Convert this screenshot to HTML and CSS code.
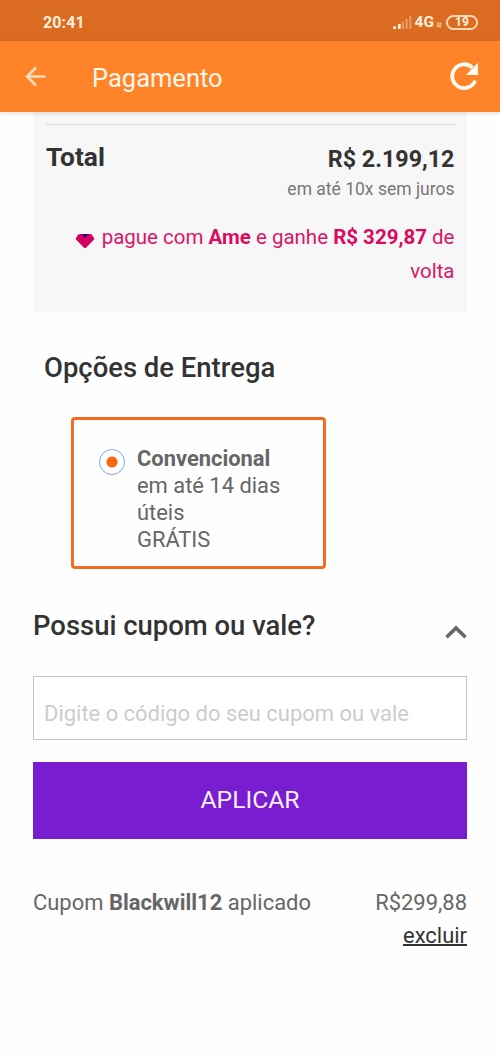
FILE: index.html
```html
<!DOCTYPE html>
<html lang="pt-BR">
<head>
<meta charset="utf-8">
<title>Pagamento</title>
<link rel="stylesheet" href="styles.css">
</head>
<body>
<div class="status">
  <span class="clock">20:41</span>
  <svg class="signal" width="19" height="13" viewBox="0 0 19 13">
    <path fill="#fff0d8" d="M0 10.500h3.200V13H0zM5 8h2.600v5H5z"/>
    <path fill="#fff" opacity=".32" d="M8.800 5.500h2.200v7.500H8.800zM12.500 3h2.200v10h-2.200zM16.200 0h2.200v13h-2.200z"/>
  </svg>
  <span class="network">4G</span>
  <svg class="data" width="6" height="6" viewBox="0 0 6 6"><path d="M2 0v5L.3 3.500M4 6V1l1.700 1.300" fill="none" stroke="#ffe4cc"/></svg>
  <span class="battery">19</span>
</div>
<header class="appbar">
  <svg class="back" width="22" height="21" viewBox="0 0 22 21"><path d="M20.500 10.500H2.500M11 1.500l-9 9 9 9" fill="none" stroke="#ffdcba" stroke-width="2.600"/></svg>
  <h1 class="title">Pagamento</h1>
  <svg class="reload" width="29" height="28" viewBox="0 0 29 28"><path d="M25.200 18.600A11.900 11.900 0 1 1 22.400 5.600" fill="none" stroke="#fffaf0" stroke-width="3.800"/><path d="M28 .8V13H15.800z" fill="#fffaf0"/></svg>
</header>
<main class="page">
  <section class="summary">
    <div class="total-row">
      <h2 class="total">Total</h2>
      <div class="price">
        <strong class="amount">R$ 2.199,12</strong>
        <span class="terms">em até 10x sem juros</span>
      </div>
    </div>
    <p class="cashback"><svg class="gem" width="20" height="16" viewBox="0 0 20 16"><path d="M5 1h10q1.200 0 2 .9L19 5q.6 1-.2 1.800L11 14.800q-1 .9-2 0L1.200 6.800Q.4 6 1 5l2-3.100Q3.800 1 5 1z" fill="#d4005f"/><path d="M6.600 1h6.800L11 4.200H9z" fill="#2c087c"/></svg>pague com <b>Ame</b> e ganhe <b>R$ 329,87</b> de<br>volta</p>
  </section>
  <h2 class="heading delivery-heading">Opções de Entrega</h2>
  <label class="option">
    <span class="radio"></span>
    <span class="option-text"><b>Convencional</b><br>em até 14 dias<br>úteis<br>GRÁTIS</span>
  </label>
  <div class="coupon-head">
    <h2 class="heading">Possui cupom ou vale?</h2>
    <svg class="chevron" width="22" height="14" viewBox="0 0 22 14"><path d="M1.500 12.300L11 3l9.500 9.300" fill="none" stroke="#666" stroke-width="3.600"/></svg>
  </div>
  <input class="code" type="text" placeholder="Digite o código do seu cupom ou vale">
  <button class="apply">APLICAR</button>
  <div class="applied">
    <span>Cupom <b>Blackwill12</b> aplicado</span>
    <span class="discount">R$299,88<br><a class="remove">excluir</a></span>
  </div>
</main>
</body>
</html>
```
FILE: styles.css
```css
* { box-sizing: border-box; }
body { margin: 0; background: #fefefe; color: #666; font-family: Roboto, sans-serif; font-size: 22px; }
h1, h2, p { margin: 0; }
b, strong { font-weight: 700; }

.status { display: flex; align-items: center; height: 41px; padding: 3px 22px 0 43px; background: #da6b21; color: #fff0dc; }
.clock { flex: 1; font-size: 16px; font-weight: 700; letter-spacing: .1px; }
.signal { margin: 0 3px 0 0; }
.network { font-size: 15.500px; font-weight: 700; line-height: 18px; }
.data { margin: 6px 4px 0 2px; }
.battery { width: 32px; height: 15px; border: 2px solid #ffd9b8; border-radius: 8px; font-size: 12px; font-weight: 700; line-height: 11.500px; text-align: center; }

.appbar { position: relative; display: flex; align-items: center; height: 71px; padding: 0 21px 0 25px; background: #ff8429; box-shadow: 0 1px 4px rgba(0, 0, 0, .15); }
.title { flex: 1; margin: 3px 0 0 45px; font-size: 25.500px; font-weight: 400; line-height: 30px; color: #fff8ea; }
.reload { margin-top: -1px; }

.page { padding: 0 33px; }
.summary { height: 199.500px; padding: 12px 12.500px 0 13px; background: #f7f7f7; }
.total-row { display: flex; justify-content: space-between; border-top: 1px solid #d8d8d8; padding-top: 17px; color: #333; }
.total { font-size: 26.300px; font-weight: 700; line-height: 30px; }
.price { display: flex; flex-direction: column; align-items: flex-end; padding-top: 2px; }
.amount { font-size: 23.300px; line-height: 30px; }
.terms { font-size: 17.500px; line-height: 31px; color: #777; }
.cashback { margin-top: 15px; font-size: 20.500px; line-height: 34px; text-align: right; color: #d91668; }
.cashback b { color: #dc0a5e; }
.gem { margin-right: 7px; vertical-align: -5px; }

.heading { font-size: 27.450px; font-weight: 500; line-height: 32px; color: #333; }
.delivery-heading { margin: 40.500px 0 0 11px; }
.option { display: flex; width: 254.500px; height: 152px; margin: 33px 0 0 38px; padding: 24px 0 0 25px; border: 3px solid #f26d21; border-radius: 4px; line-height: 27.200px; }
.radio { width: 26px; height: 26px; margin: 5px 12px 0 0; border: 1.500px solid #7ba6e8; border-radius: 50%; background: radial-gradient(circle, #ff6510 5px, transparent 6px); }
.option-text { padding-top: .6px; font-size: 21.900px; }
.coupon-head { display: flex; justify-content: space-between; align-items: flex-start; margin-top: 41px; }
.chevron { margin-top: 15px; }
.code { display: block; width: 100%; height: 64px; margin-top: 34px; padding: 10px 10px 0; border: 1px solid #c4c4c4; border-radius: 0; background: #fff; font: 21.950px Roboto, sans-serif; }
.code::placeholder { color: #ccc; opacity: 1; }
.apply { display: block; width: 100%; height: 77px; margin-top: 22px; padding: 0 0 2px; border: 0; background: #781dcf; color: #faefff; font: 24.700px Roboto, sans-serif; }
.applied { display: flex; justify-content: space-between; margin-top: 46.500px; font-size: 21.950px; line-height: 33px; }
.discount { text-align: right; }
.remove { color: #333; text-decoration: underline; text-decoration-thickness: 1.500px; }
```
